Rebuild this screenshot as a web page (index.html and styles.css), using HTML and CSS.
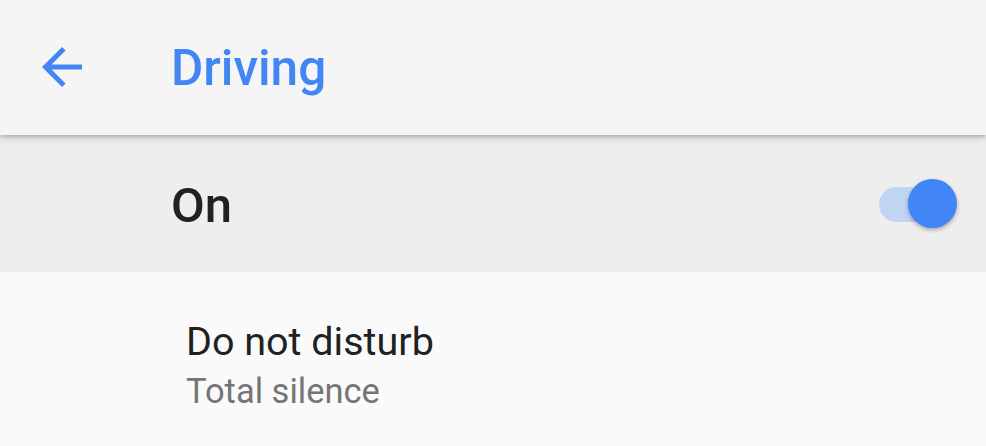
FILE: index.html
```html
<!DOCTYPE html>
<html>
<head>
    <title>Driving</title>
    <link rel="stylesheet" href="styles.css">
</head>
<body>
    <div class="appbar">
        <div class="back">
            <svg width="60" height="60" viewBox="0 0 24 24">
                <path d="M20 11H7.83l5.59-5.59L12 4l-8 8 8 8 1.41-1.41L7.83 13H20v-2z" fill="#4285f4"/>
            </svg>
        </div>
        <h1 class="title">Driving</h1>
    </div>

    <div class="master">
        <span class="master-label">On</span>
        <div class="switch">
            <div class="track"></div>
            <div class="thumb"></div>
        </div>
    </div>

    <div class="list">
        <div class="item">
            <div class="item-title">Do not disturb</div>
            <div class="item-summary">Total silence</div>
        </div>
    </div>
</body>
</html>
```

FILE: styles.css
```css
body { margin: 0; font-family: Roboto, "Noto Sans", Arial, sans-serif; background: #fafafa; height: 446px; overflow: hidden; }
.appbar { height: 135px; background: #f5f5f5; display: flex; align-items: center; position: relative; z-index: 2; box-shadow: 0 2px 4px rgba(0,0,0,0.22), 0 4px 10px rgba(0,0,0,0.08); }
.back { width: 60px; height: 60px; margin-left: 32px; margin-top: -1px; }
.back svg { display: block; }
.title { margin: 0 0 0 79px; font-size: 49.5px; font-weight: 500; color: #4285f4; }
.master { height: 137px; background: #eeeeee; display: flex; align-items: center; padding: 0 29px 0 171px; }
.master-label { flex: 1; font-size: 49px; font-weight: 500; color: #212121; margin-top: 4px; }
.switch { position: relative; width: 78px; height: 50px; }
.track { position: absolute; left: 0; top: 8px; width: 70px; height: 35px; border-radius: 18px; background: #c0d4f4; }
.thumb { position: absolute; left: 29px; top: 0; width: 49px; height: 49px; border-radius: 50%; background: #4285f4; box-shadow: 0 2px 4px rgba(0,0,0,0.3); }
.item { padding: 43px 0 0 186px; }
.item-title { font-size: 39.5px; color: #212121; line-height: 54px; }
.item-summary { font-size: 34.5px; color: #757575; line-height: 44px; }
```
